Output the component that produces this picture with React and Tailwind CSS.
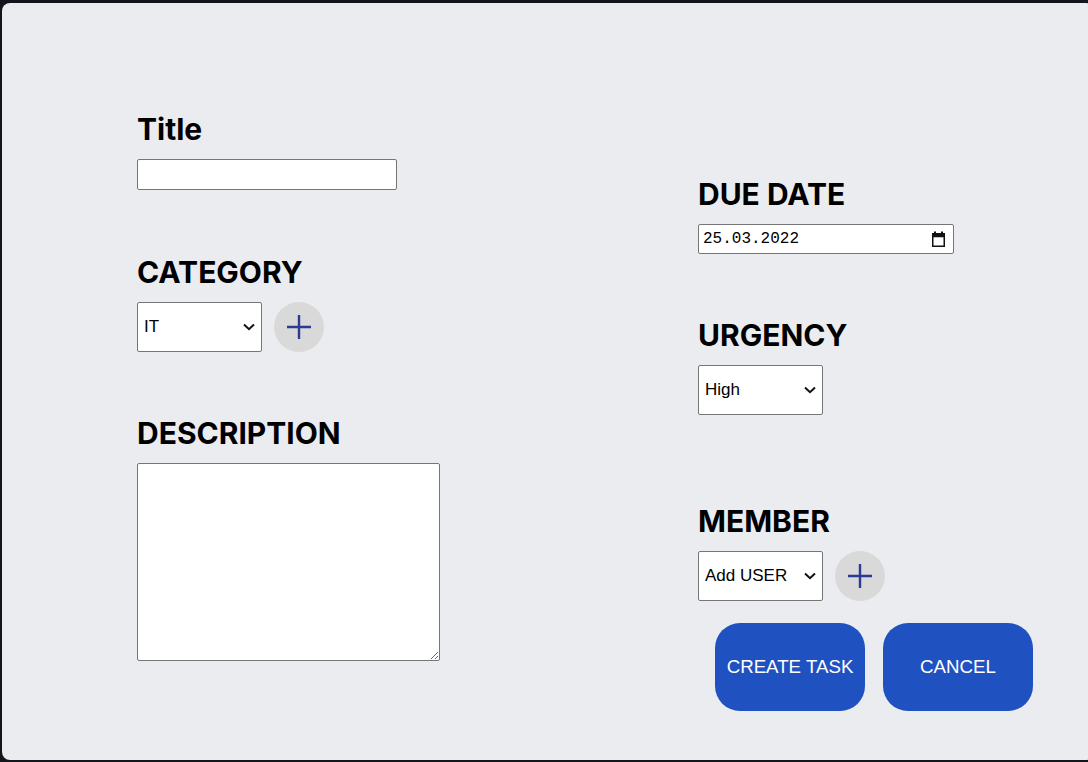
const heading = "text-[30px] leading-9 font-bold text-black font-['Inter',sans-serif]";

function Chevron() {
  return (
    <svg
      width="12"
      height="8"
      viewBox="0 0 12 8"
      className="pointer-events-none absolute right-[7px] top-1/2 -translate-y-1/2"
    >
      <path d="M1 1.5 L6 6.2 L11 1.5" fill="none" stroke="#111" strokeWidth="2" />
    </svg>
  );
}

function Select({ value, options }) {
  return (
    <div className="relative h-[50px] w-[125px]">
      <select
        defaultValue={value}
        className="h-full w-full appearance-none rounded-[2px] border border-[#767676] bg-white pl-[6px] text-[17px] text-black font-['Liberation_Sans',Arial,sans-serif]"
      >
        {options.map((o) => (
          <option key={o}>{o}</option>
        ))}
      </select>
      <Chevron />
    </div>
  );
}

function PlusButton() {
  return (
    <button className="flex h-[50px] w-[50px] items-center justify-center rounded-full bg-[#d9d9d9]">
      <svg width="26" height="26" viewBox="0 0 26 26">
        <path d="M13 1 V25 M1 13 H25" stroke="#2b3a92" strokeWidth="2.4" />
      </svg>
    </button>
  );
}

function CalendarIcon() {
  return (
    <svg width="13" height="16" viewBox="0 0 13 16">
      <rect x="0.75" y="2.75" width="11.5" height="12.5" fill="none" stroke="#111" strokeWidth="1.5" />
      <rect x="0.75" y="2.75" width="11.5" height="3.5" fill="#111" />
      <rect x="2" y="0.5" width="2" height="3" fill="#111" />
      <rect x="9" y="0.5" width="2" height="3" fill="#111" />
    </svg>
  );
}

export default function App() {
  return (
    <div className="h-[762px] w-[1088px] overflow-hidden bg-[#14141c] pl-[2px] pt-[3px]">
      <div className="grid h-[757px] w-[1092px] grid-cols-[561px_auto] rounded-lg bg-[#ebecf0] pl-[135px]">
        {/* left column */}
        <div className="flex flex-col items-start pt-[108px]">
          <h2 className={heading}>Title</h2>
          <input
            type="text"
            className="mt-3 h-[31px] w-[260px] rounded-[2px] border border-[#767676] bg-white"
          />

          <h2 className={`${heading} mt-[64px]`}>CATEGORY</h2>
          <div className="mt-3 flex items-center gap-3">
            <Select value="IT" options={["IT", "Design", "Marketing"]} />
            <PlusButton />
          </div>

          <h2 className={`${heading} mt-[63px]`}>DESCRIPTION</h2>
          <textarea className="mt-3 h-[198px] w-[303px] rounded-[2px] border border-[#767676] bg-white" />
        </div>

        {/* right column */}
        <div className="flex flex-col items-start pt-[173px]">
          <h2 className={heading}>DUE DATE</h2>
          <div className="mt-3 flex h-[30px] w-[256px] items-center justify-between rounded-[2px] border border-[#767676] bg-white pl-[4px] pr-[8px]">
            <span className="text-[16px] text-black font-['Liberation_Mono',monospace]">25.03.2022</span>
            <CalendarIcon />
          </div>

          <h2 className={`${heading} mt-[63px]`}>URGENCY</h2>
          <div className="mt-3">
            <Select value="High" options={["High", "Medium", "Low"]} />
          </div>

          <h2 className={`${heading} mt-[88px]`}>MEMBER</h2>
          <div className="mt-3 flex items-center gap-3">
            <Select value="Add USER" options={["Add USER"]} />
            <PlusButton />
          </div>

          <div className="ml-[17px] mt-[22px] flex gap-[18px] font-['Liberation_Sans',Arial,sans-serif] text-[18.7px] text-white">
            <button className="h-[88px] w-[150px] rounded-[25px] bg-[#1f52c0]">CREATE TASK</button>
            <button className="h-[88px] w-[150px] rounded-[25px] bg-[#1f52c0]">CANCEL</button>
          </div>
        </div>
      </div>
    </div>
  );
}
